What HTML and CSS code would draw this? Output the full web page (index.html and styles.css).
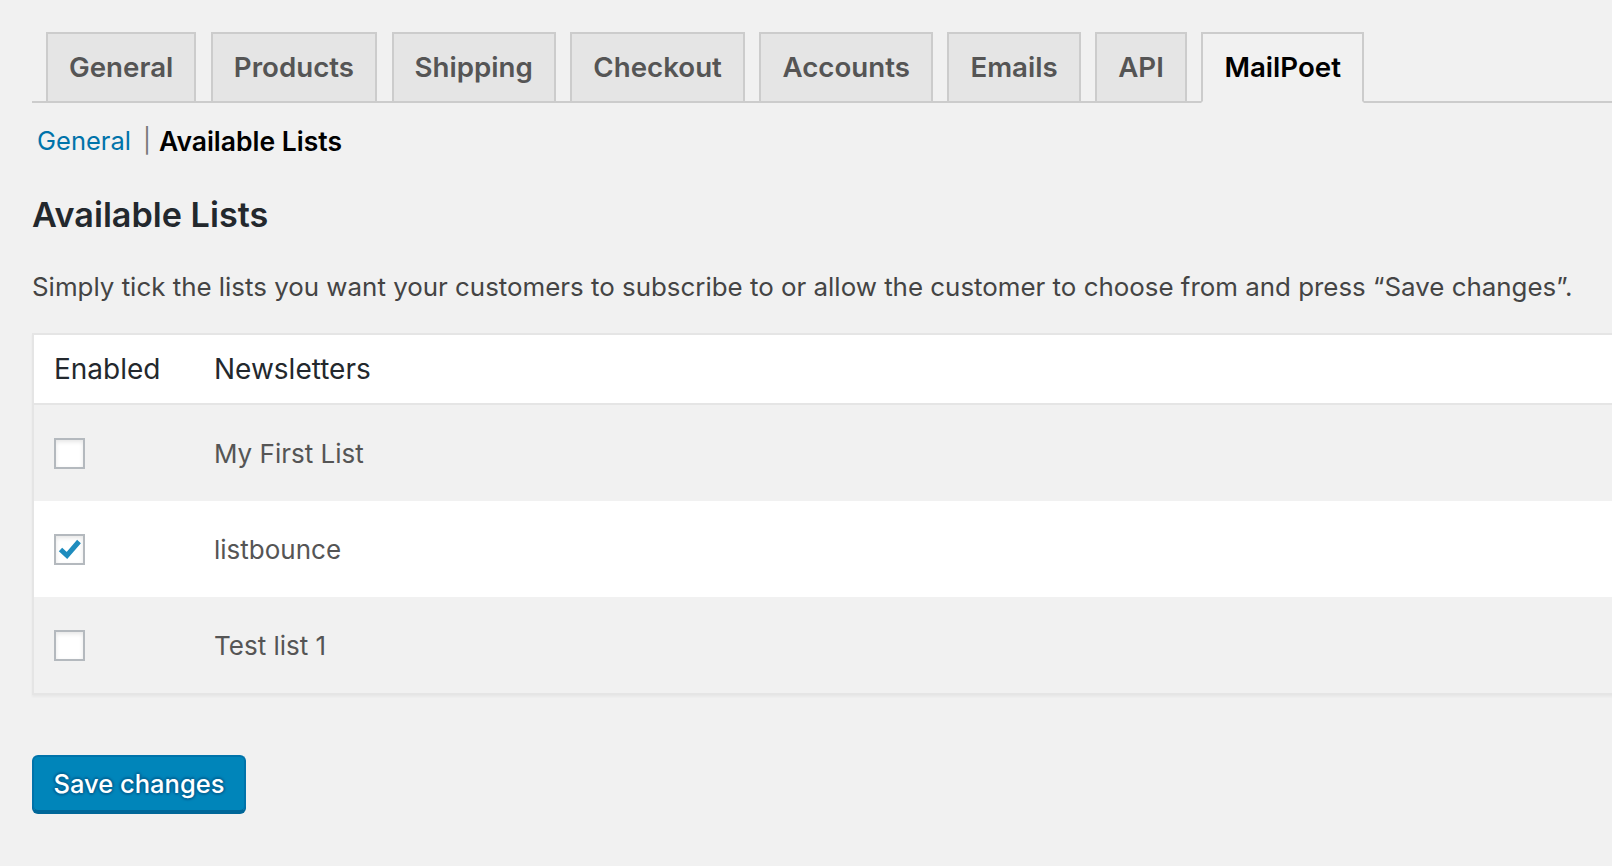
FILE: index.html
```html
<!DOCTYPE html>
<html lang="en">
<head>
<meta charset="utf-8">
<title>MailPoet settings</title>
<link rel="stylesheet" href="styles.css">
</head>
<body>
<div class="wrap">
  <nav class="tabs">
    <a class="tab" href="#">General</a>
    <a class="tab" href="#">Products</a>
    <a class="tab" href="#">Shipping</a>
    <a class="tab" href="#">Checkout</a>
    <a class="tab" href="#">Accounts</a>
    <a class="tab" href="#">Emails</a>
    <a class="tab" href="#">API</a>
    <a class="tab active" href="#">MailPoet</a>
  </nav>
  <ul class="subnav">
    <li><a class="sub-link" href="#">General</a></li>
    <li class="sep">|</li>
    <li class="sub-current">Available Lists</li>
  </ul>
  <h2 class="title">Available Lists</h2>
  <p class="desc">Simply tick the lists you want your customers to subscribe to or allow the customer to choose from and press “Save changes”.</p>
  <div class="table">
    <div class="row head">
      <div class="cell c1">Enabled</div>
      <div class="cell c2">Newsletters</div>
    </div>
    <div class="row alt">
      <div class="cell c1"><span class="cb"></span></div>
      <div class="cell c2">My First List</div>
    </div>
    <div class="row">
      <div class="cell c1"><span class="cb"><svg class="tick" viewBox="0 0 27 27" width="27" height="27"><path d="M4.5 13.5 L11 19.5 L23 5.5" fill="none" stroke="#1e8cbe" stroke-width="5"/></svg></span></div>
      <div class="cell c2">listbounce</div>
    </div>
    <div class="row alt">
      <div class="cell c1"><span class="cb"></span></div>
      <div class="cell c2">Test list 1</div>
    </div>
  </div>
  <button class="btn" type="button">Save changes</button>
</div>
</body>
</html>
```
FILE: styles.css
```css
html, body {
  margin: 0;
  padding: 0;
  background: #f1f1f1;
  overflow: hidden;
}
body {
  font-family: Inter, "Noto Sans", sans-serif;
  color: #444;
  width: 1612px;
  height: 866px;
}
.wrap {
  padding-left: 32px;
}
.tabs {
  display: flex;
  gap: 14.5px;
  padding: 32px 0 0 14px;
  border-bottom: 2px solid #ccc;
  height: 69px;
  box-sizing: content-box;
}
.tab {
  display: block;
  border: 2px solid #ccc;
  background: #e5e5e5;
  color: #555;
  font-size: 27.7px;
  font-weight: 600;
  line-height: 47px;
  padding: 10px 21px;
  text-decoration: none;
  margin-bottom: -2px;
}
.tab.active {
  background: #f1f1f1;
  color: #000;
  border-bottom-color: #f1f1f1;
}
.subnav {
  list-style: none;
  margin: 20px 0 0;
  padding: 0 0 0 5px;
  display: flex;
  font-size: 25.5px;
  line-height: 36px;
}
.sub-link {
  color: #0073aa;
  text-decoration: none;
}
.sep {
  color: #777;
  font-size: 24px;
  padding: 0 8px 0 12px;
}
.sub-current {
  color: #000;
  font-weight: 600;
  font-size: 26.5px;
}
.title {
  margin: 36px 0 0;
  font-size: 34.2px;
  line-height: 40px;
  font-weight: 600;
  color: #23282d;
}
.desc {
  margin: 34px 0 0;
  font-size: 25.9px;
  line-height: 36px;
  color: #444;
  white-space: nowrap;
}
.table {
  margin-top: 28px;
  width: 1620px;
  border: 2px solid #e5e5e5;
  border-right: none;
  box-shadow: 0 2px 2px rgba(0,0,0,0.04);
  background: #fff;
}
.row {
  display: flex;
  align-items: center;
  height: 96px;
  font-size: 26px;
  color: #555;
}
.row.alt {
  background: #f1f1f1;
}
.row.head {
  height: 68px;
  font-size: 28px;
  color: #23282d;
  border-bottom: 2px solid #e5e5e5;
}
.cell.c1 {
  width: 160px;
  padding-left: 20px;
  display: flex;
  align-items: center;
}
.cell.c2 {
  padding-left: 0;
}
.cb {
  display: block;
  width: 27px;
  height: 27px;
  border: 2px solid #b4b9be;
  background: #fff;
  box-shadow: inset 0 2px 4px rgba(0,0,0,0.1);
}
.tick {
  display: block;
}
.btn {
  display: block;
  margin-top: 60px;
  width: 214px;
  height: 57px;
  background: #0085ba;
  border: 2px solid #0073aa;
  border-bottom-color: #006799;
  border-radius: 6px;
  box-shadow: 0 2px 0 #006799;
  color: #fff;
  font-family: Inter, "Noto Sans", sans-serif;
  font-size: 25.5px;
  font-weight: 500;
  text-shadow: 0 -2px 2px #006799, 2px 0 2px #006799, 0 2px 2px #006799, -2px 0 2px #006799;
  padding: 0;
  cursor: pointer;
}
```
